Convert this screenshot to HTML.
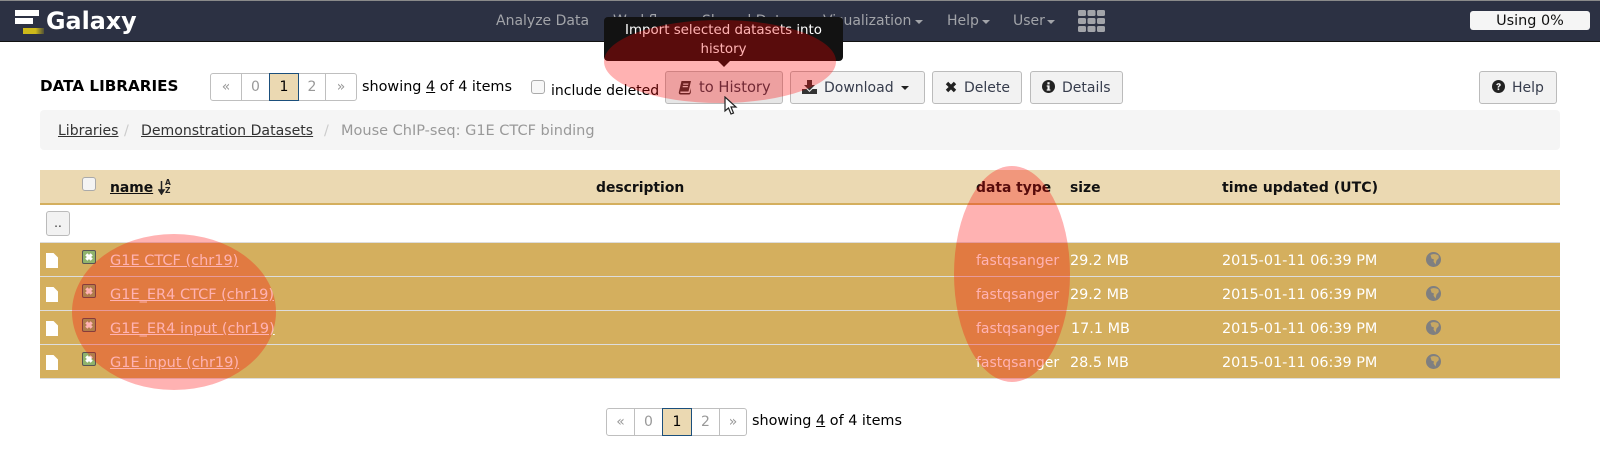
<!DOCTYPE html>
<html><head><meta charset="utf-8"><title>Galaxy</title>
<style>
html,body{margin:0;padding:0;background:#fff}
body{width:1600px;height:462px;position:relative;overflow:hidden;font-family:"DejaVu Sans",sans-serif;font-size:14.4px;color:#000}
.a{position:absolute;white-space:nowrap}
.t{position:absolute;white-space:nowrap;line-height:20px}
.nav{color:#a2a4a9;font-size:14px}
.caret{position:absolute;width:0;height:0;border-left:4px solid transparent;border-right:4px solid transparent;border-top:4px solid #a2a4a9}
.btn{position:absolute;box-sizing:border-box;top:71px;height:33px;border:1px solid #bbb;border-radius:3px;background:#f2f2f2;color:#363c4c;line-height:32px;white-space:nowrap;font-size:14px}
.pg{position:absolute;box-sizing:border-box;border:1px solid #bfbfbf;background:#fff;color:#999;text-align:center;line-height:27px;font-size:14px}
.pg.on{background:#ebd9b2;border:1px solid #1b4f7c;color:#000;z-index:1}
.row{position:absolute;left:40px;width:1520px;height:33px;background:#d4af5e;border-bottom:1px solid #ddd}
.w{color:#fff}
.lnk{color:#fff;text-decoration:underline}
.th{font-weight:bold;color:#111;font-size:13.9px}
.chk{position:absolute;box-sizing:border-box;width:14px;height:14px;border-radius:3px;border:1px solid #aaa;background:#f4f4f4}
.box{position:absolute;box-sizing:border-box;width:14px;height:14px;border-radius:2px;border:1px solid #555;background:#8fb36c}
.box svg,.ic svg{display:block}
.ov{position:absolute;border-radius:50%;background:rgba(255,0,0,.3)}
</style></head><body>

<!-- navbar -->
<div class="a" style="left:0;top:0;width:1600px;height:42px;background:#2c3143;border-top:1px solid #8a8a8a;border-bottom:1px solid #111;box-sizing:border-box"></div>
<div class="a" style="left:15px;top:10px;width:24px;height:6px;background:#fff"></div>
<div class="a" style="left:15px;top:18px;width:18px;height:6px;background:#fff"></div>
<div class="a" style="left:23px;top:28px;width:21px;height:6px;background:linear-gradient(90deg,#cdb91a 60%,#4f4f38)"></div>
<div class="t" style="left:46px;top:8px;font-size:23.8px;line-height:26px;font-weight:bold;color:#fff">Galaxy</div>

<div class="t nav" style="left:496px;top:11px">Analyze Data</div>
<div class="t nav" style="left:613px;top:11px">Workflow</div>
<div class="t nav" style="left:702px;top:11px">Shared Data</div>
<div class="caret" style="left:795px;top:20px"></div>
<div class="t nav" style="left:823px;top:11px">Visualization</div>
<div class="caret" style="left:915px;top:20px"></div>
<div class="t nav" style="left:947px;top:11px">Help</div>
<div class="caret" style="left:982px;top:20px"></div>
<div class="t nav" style="left:1013px;top:11px">User</div>
<div class="caret" style="left:1047px;top:20px"></div>
<svg class="a" style="left:1078px;top:10px" width="27" height="22"><g fill="#a2a4a9"><rect x="0" y="0" width="8" height="6" rx="1.5"/><rect x="9.5" y="0" width="8" height="6" rx="1.5"/><rect x="19" y="0" width="8" height="6" rx="1.5"/><rect x="0" y="8" width="8" height="6" rx="1.5"/><rect x="9.5" y="8" width="8" height="6" rx="1.5"/><rect x="19" y="8" width="8" height="6" rx="1.5"/><rect x="0" y="16" width="8" height="6" rx="1.5"/><rect x="9.5" y="16" width="8" height="6" rx="1.5"/><rect x="19" y="16" width="8" height="6" rx="1.5"/></g></svg>
<div class="a" style="left:1470px;top:11px;width:120px;height:19px;background:#f5f5f5;border-radius:3px;text-align:center;line-height:20px;color:#111">Using 0%</div>

<!-- toolbar -->
<div class="t" style="left:40px;top:76px;font-weight:bold;font-size:15.2px;color:#000">DATA LIBRARIES</div>
<div class="pg" style="left:210px;top:73px;width:32px;height:28px;border-radius:3px 0 0 3px">«</div>
<div class="pg" style="left:241px;top:73px;width:29px;height:28px">0</div>
<div class="pg on" style="left:269px;top:73px;width:30px;height:28px">1</div>
<div class="pg" style="left:298px;top:73px;width:28px;height:28px">2</div>
<div class="pg" style="left:325px;top:73px;width:32px;height:28px;border-radius:0 3px 3px 0">»</div>
<div class="t" style="left:362px;top:77px">showing <u>4</u> of 4 items</div>
<div class="chk" style="left:531px;top:80px;background:#f7f7f7"></div>
<div class="t" style="left:551px;top:81px;font-size:14px">include deleted</div>

<div class="btn" style="left:665px;width:118px;background:#e6e6e6;padding-left:33px;font-size:14.7px">to History</div>
<svg class="a" style="left:678px;top:80px" width="14" height="15" viewBox="0 0 14 15"><path d="M3.5 1H13L10.5 11.5H2.6C2 11.5 2 13 3 13H11.5L12.8 8V13L11.5 14.5H2.5C1 14.5.5 13 1 11.5ZM5.2 3.5V4.8H10.2L10.5 3.5ZM4.7 6V7.3H9.7L10 6Z" fill="#333" fill-rule="evenodd"/></svg>

<div class="btn" style="left:790px;width:135px;padding-left:33px">Download</div>
<svg class="a" style="left:802px;top:80px" width="15" height="14" viewBox="0 0 15 14"><path d="M5 0H10V5H13L7.5 10.5 2 5H5ZM0 9H4.5L7.5 12 10.5 9H15V14H0Z" fill="#333"/></svg>
<div class="caret" style="left:901px;top:86px;border-top-color:#222"></div>

<div class="btn" style="left:932px;width:90px;padding-left:31px">Delete</div>
<svg class="a" style="left:945px;top:81px" width="12" height="12" viewBox="0 0 12 12"><path d="M2 2L10 10M10 2L2 10" stroke="#222" stroke-width="3.4"/></svg>

<div class="btn" style="left:1030px;width:93px;padding-left:31px">Details</div>
<svg class="a" style="left:1042px;top:80px" width="13" height="13" viewBox="0 0 13 13"><circle cx="6.5" cy="6.5" r="6.5" fill="#222"/><rect x="5.4" y="2.2" width="2.2" height="2.2" fill="#f2f2f2"/><path d="M4.7 5.4H7.6V9.4H8.4V10.6H4.7V9.4H5.5V6.6H4.7Z" fill="#f2f2f2"/></svg>

<div class="btn" style="left:1479px;width:78px;padding-left:32px">Help</div>
<svg class="a" style="left:1492px;top:80px" width="13" height="13" viewBox="0 0 13 13"><circle cx="6.5" cy="6.5" r="6.5" fill="#222"/><path d="M4.3 5C4.4 2.6 8.8 2.5 8.8 4.9 8.8 6.3 7.1 6.3 7.1 7.6H5.6C5.6 5.8 7.1 5.8 7.1 5 7.1 4.2 5.9 4.3 5.8 5.2Z" fill="#f2f2f2"/><rect x="5.6" y="8.4" width="1.6" height="1.7" fill="#f2f2f2"/></svg>

<!-- breadcrumb -->
<div class="a" style="left:40px;top:110px;width:1520px;height:40px;background:#f5f5f5;border-radius:4px"></div>
<div class="t" style="left:58px;top:121px;color:#333;text-decoration:underline;font-size:14px">Libraries</div>
<div class="t" style="left:124px;top:121px;color:#ccc">/</div>
<div class="t" style="left:141px;top:121px;color:#333;text-decoration:underline;font-size:14.1px">Demonstration Datasets</div>
<div class="t" style="left:324px;top:121px;color:#ccc">/</div>
<div class="t" style="left:341px;top:121px;color:#999;font-size:14.5px">Mouse ChIP-seq: G1E CTCF binding</div>

<!-- table header -->
<div class="a" style="left:40px;top:170px;width:1520px;height:33px;background:#ebd9b2;border-bottom:2px solid #d4af5e"></div>
<div class="chk" style="left:82px;top:177px"></div>
<div class="t th" style="left:110px;top:178px;text-decoration:underline">name</div>
<svg class="a" style="left:158px;top:180px" width="14" height="15" viewBox="0 0 14 15"><path d="M3.5 1V12M1 10L3.5 14 6 10Z" stroke="#222" stroke-width="1.5" fill="#222"/></svg>
<div class="a" style="left:165px;top:179px;font-size:7.5px;line-height:7.5px;font-weight:bold;color:#222">A<br>Z</div>
<div class="t th" style="left:596px;top:178px">description</div>
<div class="t th" style="left:976px;top:178px">data type</div>
<div class="t th" style="left:1070px;top:178px">size</div>
<div class="t th" style="left:1222px;top:178px;font-size:14.1px">time updated (UTC)</div>

<div class="a" style="left:46px;top:211px;width:24px;height:25px;box-sizing:border-box;border:1px solid #bbb;border-radius:3px;background:#f2f2f2;text-align:center;line-height:22px;color:#333;font-size:12px">..</div>
<div class="a" style="left:40px;top:242px;width:1520px;height:1px;background:#ddd"></div>

<!-- rows -->
<div class="row" style="top:243px"></div>
<div class="row" style="top:277px"></div>
<div class="row" style="top:311px"></div>
<div class="row" style="top:345px"></div>

<!-- file icons -->
<svg class="a" style="left:46px;top:253px" width="12" height="15" viewBox="0 0 12 15"><path d="M0 0H7.5L12 4.5V15H0Z" fill="#fff"/></svg>
<svg class="a" style="left:46px;top:287px" width="12" height="15" viewBox="0 0 12 15"><path d="M0 0H7.5L12 4.5V15H0Z" fill="#fff"/></svg>
<svg class="a" style="left:46px;top:321px" width="12" height="15" viewBox="0 0 12 15"><path d="M0 0H7.5L12 4.5V15H0Z" fill="#fff"/></svg>
<svg class="a" style="left:46px;top:355px" width="12" height="15" viewBox="0 0 12 15"><path d="M0 0H7.5L12 4.5V15H0Z" fill="#fff"/></svg>

<!-- status boxes -->
<div class="box" style="left:82px;top:250px"><svg width="12" height="12"><path d="M3.3 3.3L8.7 8.7M8.7 3.3L3.3 8.7" stroke="#fff" stroke-width="3"/></svg></div>
<div class="box" style="left:82px;top:284px"><svg width="12" height="12"><path d="M3.3 3.3L8.7 8.7M8.7 3.3L3.3 8.7" stroke="#fff" stroke-width="3"/></svg></div>
<div class="box" style="left:82px;top:318px"><svg width="12" height="12"><path d="M3.3 3.3L8.7 8.7M8.7 3.3L3.3 8.7" stroke="#fff" stroke-width="3"/></svg></div>
<div class="box" style="left:82px;top:352px"><svg width="12" height="12"><path d="M3.3 3.3L8.7 8.7M8.7 3.3L3.3 8.7" stroke="#fff" stroke-width="3"/></svg></div>

<!-- names -->
<div class="t lnk" style="left:110px;top:251px;font-size:14.5px">G1E CTCF (chr19)</div>
<div class="t lnk" style="left:110px;top:285px;font-size:14.5px">G1E_ER4 CTCF (chr19)</div>
<div class="t lnk" style="left:110px;top:319px;font-size:14.5px">G1E_ER4 input (chr19)</div>
<div class="t lnk" style="left:110px;top:353px;font-size:14.5px">G1E input (chr19)</div>

<div class="t w" style="left:976px;top:251px;font-size:14px">fastqsanger</div>
<div class="t w" style="left:976px;top:285px;font-size:14px">fastqsanger</div>
<div class="t w" style="left:976px;top:319px;font-size:14px">fastqsanger</div>
<div class="t w" style="left:976px;top:353px;font-size:14px">fastqsanger</div>

<div class="t w" style="left:1070px;top:251px">29.2 MB</div>
<div class="t w" style="left:1070px;top:285px">29.2 MB</div>
<div class="t w" style="left:1071px;top:319px">17.1 MB</div>
<div class="t w" style="left:1070px;top:353px">28.5 MB</div>

<div class="t w" style="left:1222px;top:251px">2015-01-11 06:39 PM</div>
<div class="t w" style="left:1222px;top:285px">2015-01-11 06:39 PM</div>
<div class="t w" style="left:1222px;top:319px">2015-01-11 06:39 PM</div>
<div class="t w" style="left:1222px;top:353px">2015-01-11 06:39 PM</div>

<!-- globes -->
<svg class="a" style="left:1426px;top:252px" width="15" height="15" viewBox="0 0 15 15"><circle cx="7.5" cy="7.5" r="7.5" fill="#7f7f80"/><path d="M4.5 3C7 1.5 10.5 2 12.5 3.5L12.8 6 10.5 8.5 9.5 12.5 7.5 9.5 8 7.5 5.5 6.5Z" fill="#d4af5e" opacity=".85"/></svg>
<svg class="a" style="left:1426px;top:286px" width="15" height="15" viewBox="0 0 15 15"><circle cx="7.5" cy="7.5" r="7.5" fill="#7f7f80"/><path d="M4.5 3C7 1.5 10.5 2 12.5 3.5L12.8 6 10.5 8.5 9.5 12.5 7.5 9.5 8 7.5 5.5 6.5Z" fill="#d4af5e" opacity=".85"/></svg>
<svg class="a" style="left:1426px;top:320px" width="15" height="15" viewBox="0 0 15 15"><circle cx="7.5" cy="7.5" r="7.5" fill="#7f7f80"/><path d="M4.5 3C7 1.5 10.5 2 12.5 3.5L12.8 6 10.5 8.5 9.5 12.5 7.5 9.5 8 7.5 5.5 6.5Z" fill="#d4af5e" opacity=".85"/></svg>
<svg class="a" style="left:1426px;top:354px" width="15" height="15" viewBox="0 0 15 15"><circle cx="7.5" cy="7.5" r="7.5" fill="#7f7f80"/><path d="M4.5 3C7 1.5 10.5 2 12.5 3.5L12.8 6 10.5 8.5 9.5 12.5 7.5 9.5 8 7.5 5.5 6.5Z" fill="#d4af5e" opacity=".85"/></svg>

<!-- bottom pager -->
<div class="pg" style="left:606px;top:408px;width:29px;height:28px;border-radius:3px 0 0 3px">«</div>
<div class="pg" style="left:634px;top:408px;width:29px;height:28px">0</div>
<div class="pg on" style="left:662px;top:408px;width:30px;height:28px">1</div>
<div class="pg" style="left:691px;top:408px;width:29px;height:28px">2</div>
<div class="pg" style="left:719px;top:408px;width:28px;height:28px;border-radius:0 3px 3px 0">»</div>
<div class="t" style="left:752px;top:411px">showing <u>4</u> of 4 items</div>

<!-- tooltip -->
<div class="a" style="left:604px;top:17px;width:239px;height:44px;background:#121212;border-radius:4px;color:#fff;text-align:center;font-size:13.4px;line-height:19px;padding-top:4px;box-sizing:border-box">Import selected datasets into<br>history</div>
<div class="a" style="left:718px;top:61px;width:0;height:0;border-left:6px solid transparent;border-right:6px solid transparent;border-top:6px solid #121212"></div>

<!-- red highlight ellipses -->
<div class="ov" style="left:604px;top:20px;width:232px;height:83px"></div>
<div class="ov" style="left:72px;top:234px;width:204px;height:156px"></div>
<div class="ov" style="left:954px;top:166px;width:116px;height:216px"></div>

<!-- cursor -->
<svg class="a" style="left:724px;top:96px" width="14" height="20" viewBox="0 0 14 20"><path d="M1 1V15L4.5 12 7 18 9.5 17 7 11H12Z" fill="#fff" stroke="#222" stroke-width="1.2"/></svg>

</body></html>
